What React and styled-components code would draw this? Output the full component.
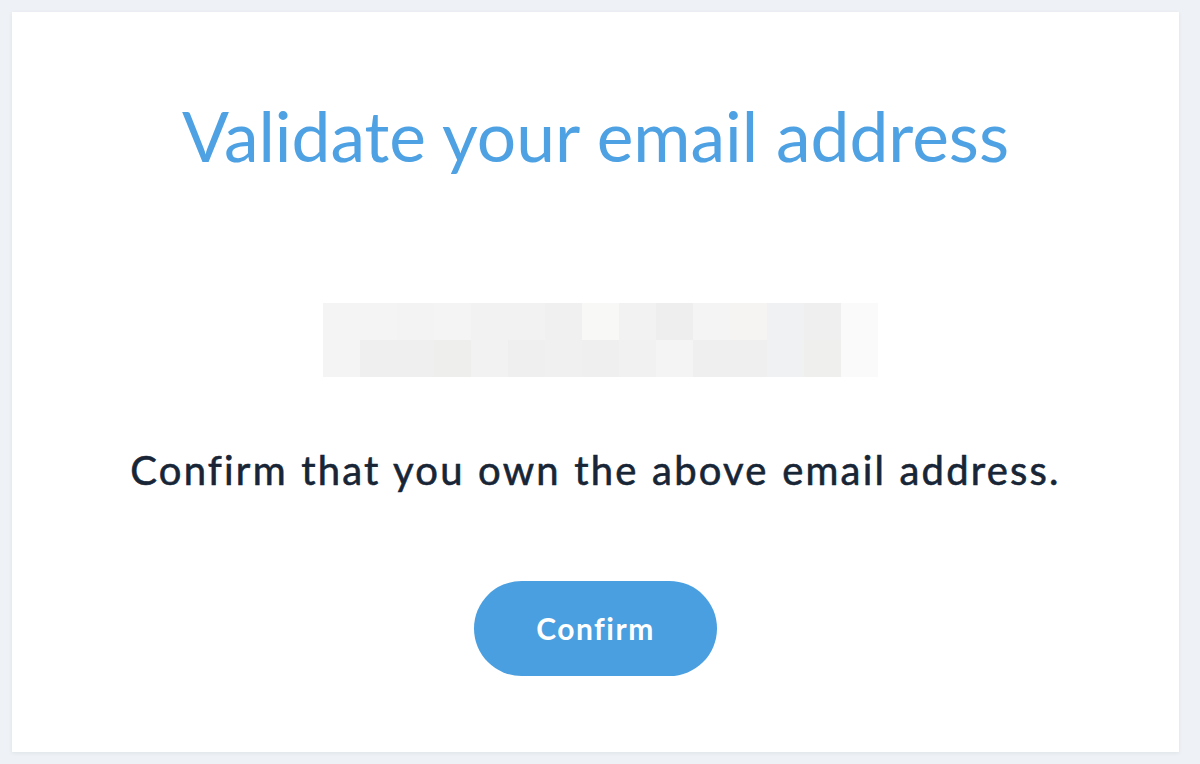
import React from 'react';
import styled, { createGlobalStyle } from 'styled-components';

const GlobalStyle = createGlobalStyle`
  html, body {
    margin: 0;
    padding: 0;
    background: #eef2f6;
    font-family: Lato, "Open Sans", sans-serif;
  }
`;

const Page = styled.main`
  padding: 12px 21px 12px 12px;
  min-height: 764px;
  box-sizing: border-box;
`;

const Card = styled.section`
  background: #fff;
  height: 740px;
  box-sizing: border-box;
  box-shadow: 0 1px 4px rgba(30, 50, 80, 0.08);
  display: flex;
  flex-direction: column;
  align-items: center;
  padding-top: 89px;
`;

const Title = styled.h1`
  margin: 0;
  font-size: 69.5px;
  font-weight: 400;
  line-height: 1;
  color: #4ea1e2;
`;

const Redacted = styled.div`
  margin: 132px 0 0 10px;
  display: grid;
  grid-template-columns: repeat(15, 37px);
  grid-auto-rows: 37px;
`;

const Cell = styled.span`
  background: ${(p) => p.$c};
`;

const Message = styled.p`
  margin: 73px 0 0;
  font-size: 40px;
  line-height: 1;
  letter-spacing: 2.2px;
  word-spacing: 1px;
  color: #172536;
  -webkit-text-stroke: 0.6px #172536;
`;

const ConfirmButton = styled.button`
  margin-top: 91px;
  width: 243px;
  height: 95px;
  border: none;
  border-radius: 48px;
  background: #4a9fe0;
  color: #fff;
  font-family: Lato, "Open Sans", sans-serif;
  font-weight: 700;
  font-size: 30px;
  letter-spacing: 1.5px;
  cursor: pointer;
`;

const cells = [
  '#f4f4f4', '#f4f4f4', '#f2f3f2', '#f4f4f4', '#f2f2f2', '#f2f2f2', '#f0f0f0', '#f8f8f6',
  '#f2f2f2', '#eeeeee', '#f3f4f3', '#f5f4f2', '#f0f1f3', '#efefef', '#fafafa',
  '#f4f4f4', '#efefef', '#efefef', '#eeeeec', '#f2f2f2', '#efefef', '#f0f0f0', '#efefef',
  '#f0f1f0', '#f4f4f4', '#efefef', '#efefef', '#f0f1f3', '#efefed', '#fafafa',
];

export default function App() {
  return (
    <>
      <GlobalStyle />
      <Page>
        <Card>
          <Title>Validate your email address</Title>
          <Redacted>
            {cells.map((c, i) => (
              <Cell key={i} $c={c} />
            ))}
          </Redacted>
          <Message>Confirm that you own the above email address.</Message>
          <ConfirmButton>Confirm</ConfirmButton>
        </Card>
      </Page>
    </>
  );
}
